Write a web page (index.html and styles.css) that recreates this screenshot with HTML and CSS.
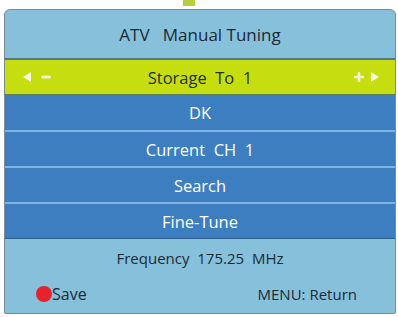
FILE: index.html
```html
<!DOCTYPE html>
<html>
<head>
<meta charset="utf-8">
<link rel="stylesheet" href="styles.css">
</head>
<body>
<div class="marker"></div>
<div class="panel">
  <div class="title">ATV&nbsp;&nbsp; Manual Tuning</div>
  <div class="row sel">
    <span class="ctl left">
      <svg width="10" height="12" viewBox="0 0 10 12"><path d="M9 1 L1 6 L9 11 Z" fill="#f4f8e0"/></svg>
      <svg width="12" height="6" viewBox="0 0 12 6"><rect x="1" y="1.5" width="10" height="3" rx="1.5" fill="#eef4d0"/></svg>
    </span>
    <span class="label">Storage&nbsp; To&nbsp; 1</span>
    <span class="ctl right">
      <svg width="10" height="10" viewBox="0 0 10 10"><path d="M5 1 V9 M1 5 H9" stroke="#eef4d0" stroke-width="2.6" stroke-linecap="round"/></svg>
      <svg width="10" height="12" viewBox="0 0 10 12"><path d="M1 1 L9 6 L1 11 Z" fill="#f4f8e0"/></svg>
    </span>
  </div>
  <div class="row blue first">DK</div>
  <div class="row blue">Current&nbsp; CH&nbsp; 1</div>
  <div class="row blue">Search</div>
  <div class="row blue last">Fine-Tune</div>
  <div class="freq">Frequency&nbsp; 175.25&nbsp; MHz</div>
  <div class="foot">
    <span class="save"><span class="dot"></span>Save</span>
    <span class="ret">MENU: Return</span>
  </div>
</div>
</body>
</html>
```
FILE: styles.css
```css
html, body {
  margin: 0;
  padding: 0;
  background: #ffffff;
}
body {
  width: 398px;
  height: 317px;
  position: relative;
  font-family: "Open Sans", "DejaVu Sans", sans-serif;
  overflow: hidden;
}
.marker {
  position: absolute;
  left: 183px;
  top: 0;
  width: 12px;
  height: 6px;
  background: #b8cf3a;
}
.panel {
  position: absolute;
  left: 4px;
  top: 9px;
  width: 390px;
  height: 303px;
  border: 1px solid #7b8a94;
  border-radius: 6px 6px 2px 2px;
  background: #86c0da;
  display: flex;
  flex-direction: column;
  overflow: hidden;
}
.title {
  height: 48px;
  display: flex;
  align-items: center;
  justify-content: center;
  font-size: 17px;
  color: #1d2a36;
  border-bottom: 2px solid #4f7790;
}
.row {
  height: 34px;
  display: flex;
  align-items: center;
  justify-content: center;
  font-size: 16.5px;
  flex: none;
}
.sel {
  background: #c6dd0f;
  color: #22301a;
  position: relative;
  height: 34px;
  border-bottom: 1px solid #5b7f55;
}
.ctl {
  position: absolute;
  top: 0;
  bottom: 0;
  display: flex;
  align-items: center;
  gap: 8px;
}
.ctl.left { left: 17px; }
.ctl.right { right: 15px; gap: 6px; }
.blue {
  background: #3c7ec0;
  color: #ffffff;
  border-bottom: 2px solid #7db4e2;
}
.blue.first {
  height: 35px;
}
.blue.last {
  border-bottom: 1px solid #2f5f8e;
}
.freq {
  height: 38px;
  display: flex;
  align-items: center;
  justify-content: center;
  font-size: 15px;
  color: #1d2a36;
  margin-top: 0;
}
.foot {
  flex: 1;
  display: flex;
  align-items: center;
  justify-content: space-between;
  padding: 0 38px 2px 31px;
  font-size: 15px;
  color: #1d2a36;
}
.save {
  display: flex;
  align-items: center;
  font-size: 16px;
}
.dot {
  width: 16px;
  height: 16px;
  border-radius: 50%;
  background: #e8222c;
  display: inline-block;
}
```
